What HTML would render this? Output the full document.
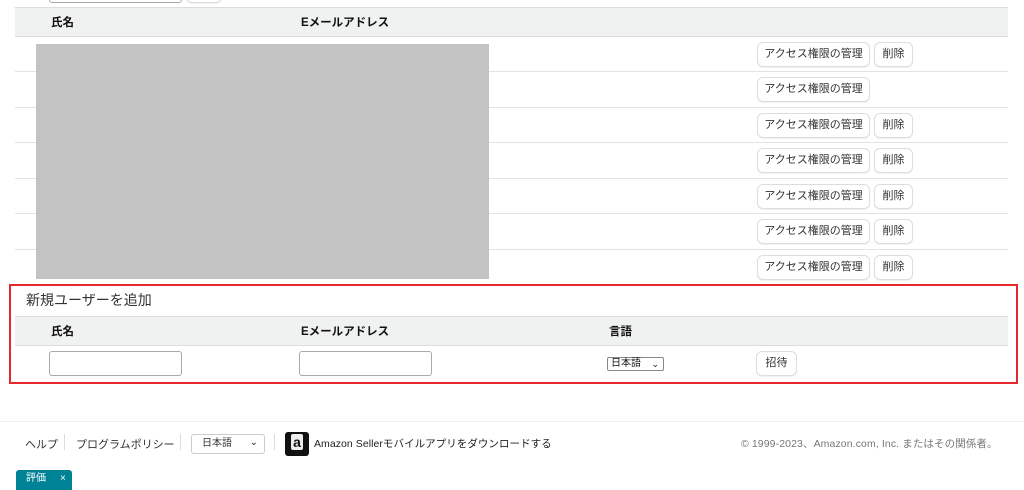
<!DOCTYPE html>
<html><head><meta charset="utf-8"><style>
*{box-sizing:border-box;margin:0;padding:0}
body{width:1024px;height:487px;overflow:hidden;background:#fff;font-family:"Liberation Sans","Noto Sans CJK JP",sans-serif;color:#111;position:relative;font-size:12px}
.a{position:absolute}
.hdr{background:#f0f1f1;border-top:1px solid #ddd;border-bottom:1px solid #ddd}
.th{font-weight:bold;font-size:11.5px}
.line{height:1px;background:#e3e3e3;left:15px;width:993px}
.btn{position:absolute;height:25px;border:1px solid #ddd;border-radius:6px;background:#fff;font-size:11px;color:#333;line-height:23px;text-align:center;box-shadow:0 1px 1px rgba(0,0,0,.06)}
.inp{position:absolute;height:25px;border:1px solid #aaa;border-radius:3px;background:#fff}
</style></head><body>
<div class="inp" style="left:49px;top:-22px;width:133px"></div>
<div class="btn" style="left:186px;top:-22px;width:36px"></div>
<div class="a hdr" style="left:15px;top:7px;width:993px;height:30px"></div>
<div class="a th" style="left:51px;top:14px">氏名</div>
<div class="a th" style="left:301px;top:14px">Eメールアドレス</div>
<div class="a line" style="top:71px"></div>
<div class="a line" style="top:107px"></div>
<div class="a line" style="top:142px"></div>
<div class="a line" style="top:178px"></div>
<div class="a line" style="top:213px"></div>
<div class="a line" style="top:249px"></div>
<div class="a line" style="top:284px"></div>
<div class="a" style="left:36px;top:44px;width:453px;height:235px;background:#c3c3c3"></div>
<div class="btn" style="left:757px;top:42px;width:113px">アクセス権限の管理</div><div class="btn" style="left:874px;top:42px;width:39px">削除</div>
<div class="btn" style="left:757px;top:77px;width:113px">アクセス権限の管理</div>
<div class="btn" style="left:757px;top:113px;width:113px">アクセス権限の管理</div><div class="btn" style="left:874px;top:113px;width:39px">削除</div>
<div class="btn" style="left:757px;top:148px;width:113px">アクセス権限の管理</div><div class="btn" style="left:874px;top:148px;width:39px">削除</div>
<div class="btn" style="left:757px;top:184px;width:113px">アクセス権限の管理</div><div class="btn" style="left:874px;top:184px;width:39px">削除</div>
<div class="btn" style="left:757px;top:219px;width:113px">アクセス権限の管理</div><div class="btn" style="left:874px;top:219px;width:39px">削除</div>
<div class="btn" style="left:757px;top:255px;width:113px">アクセス権限の管理</div><div class="btn" style="left:874px;top:255px;width:39px">削除</div>

<div class="a" style="left:9px;top:284px;width:1009px;height:100px;border:2px solid #e8262e"></div>
<div class="a" style="left:26px;top:290px;font-size:14px;color:#333">新規ユーザーを追加</div>
<div class="a hdr" style="left:15px;top:316px;width:993px;height:30px"></div>
<div class="a th" style="left:51px;top:323px">氏名</div>
<div class="a th" style="left:301px;top:323px">Eメールアドレス</div>
<div class="a th" style="left:609px;top:323px">言語</div>
<div class="inp" style="left:49px;top:351px;width:133px"></div>
<div class="inp" style="left:299px;top:351px;width:133px"></div>
<div class="a" style="left:607px;top:357px;width:57px;height:14px;border:1px solid #888;border-radius:2px;font-size:10px;line-height:12px;padding-left:3px">日本語<span style="position:absolute;right:4px;top:0;font-size:9px">⌄</span></div>
<div class="btn" style="left:756px;top:351px;width:41px">招待</div>

<div class="a" style="left:0;top:421px;width:1024px;height:1px;background:#eee"></div>
<div class="a" style="left:25px;top:436px;font-size:11px;color:#333">ヘルプ</div>
<div class="a" style="left:64px;top:434px;width:1px;height:16px;background:#ddd"></div>
<div class="a" style="left:76px;top:436px;font-size:11px;color:#333">プログラムポリシー</div>
<div class="a" style="left:180px;top:434px;width:1px;height:16px;background:#ddd"></div>
<div class="a" style="left:191px;top:434px;width:74px;height:20px;border:1px solid #ccc;border-radius:3px;font-size:10px;line-height:18px;padding-left:10px;color:#333">日本語<span style="position:absolute;right:6px;top:-1px">⌄</span></div>
<div class="a" style="left:274px;top:434px;width:1px;height:16px;background:#ddd"></div>
<div class="a" style="left:285px;top:432px;width:24px;height:24px;background:#111;border-radius:3px;color:#fff;font-weight:bold;font-size:14px;text-align:center;line-height:20px"><span style="background:#eee;color:#111;padding:0 2px;border-radius:2px">a</span></div>
<div class="a" style="left:314px;top:436px;font-size:10.5px;color:#222;letter-spacing:0.05px">Amazon Sellerモバイルアプリをダウンロードする</div>
<div class="a" style="left:741px;top:436px;font-size:10.5px;color:#777;letter-spacing:0.1px">© 1999-2023、Amazon.com, Inc. またはその関係者。</div>
<div class="a" style="left:16px;top:470px;width:56px;height:20px;background:#008296;border-radius:3px 3px 0 0;color:#fff;font-size:10px;line-height:18px;padding-left:10px">評価<span style="margin-left:14px">×</span></div>
</body></html>
